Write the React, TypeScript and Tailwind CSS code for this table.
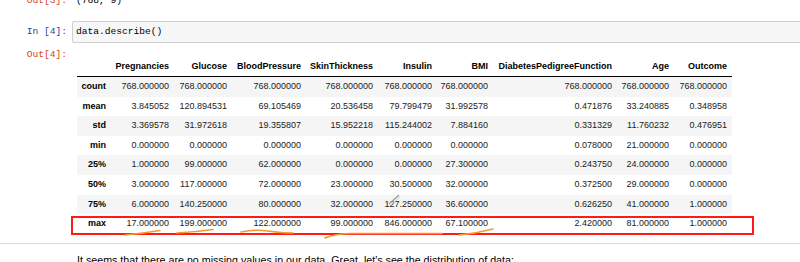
import React from 'react';

const columns = ['Pregnancies', 'Glucose', 'BloodPressure', 'SkinThickness', 'Insulin', 'BMI', 'DiabetesPedigreeFunction', 'Age', 'Outcome'];

const rows: [string, string[]][] = [
  ['count', ['768.000000', '768.000000', '768.000000', '768.000000', '768.000000', '768.000000', '768.000000', '768.000000', '768.000000']],
  ['mean', ['3.845052', '120.894531', '69.105469', '20.536458', '79.799479', '31.992578', '0.471876', '33.240885', '0.348958']],
  ['std', ['3.369578', '31.972618', '19.355807', '15.952218', '115.244002', '7.884160', '0.331329', '11.760232', '0.476951']],
  ['min', ['0.000000', '0.000000', '0.000000', '0.000000', '0.000000', '0.000000', '0.078000', '21.000000', '0.000000']],
  ['25%', ['1.000000', '99.000000', '62.000000', '0.000000', '0.000000', '27.300000', '0.243750', '24.000000', '0.000000']],
  ['50%', ['3.000000', '117.000000', '72.000000', '23.000000', '30.500000', '32.000000', '0.372500', '29.000000', '0.000000']],
  ['75%', ['6.000000', '140.250000', '80.000000', '32.000000', '127.250000', '36.600000', '0.626250', '41.000000', '1.000000']],
  ['max', ['17.000000', '199.000000', '122.000000', '99.000000', '846.000000', '67.100000', '2.420000', '81.000000', '1.000000']],
];

const gridCols = 'grid grid-cols-[34px_63px_58px_74px_72px_59px_56px_124px_57px_58px]';
const mono = "font-['Liberation_Mono',monospace] text-[9.6px]";

const App = () => {
  return (
    <div className="relative w-[800px] h-[262px] overflow-hidden bg-white font-['Liberation_Sans',Arial,sans-serif]">
      {/* previous output, cut at the top */}
      <div className={`flex h-[14px] -mt-[6px] leading-[14px] ${mono}`}>
        <div className="w-[72px] pr-[5px] text-right text-[#D84315]">Out[3]:</div>
        <div className="pl-[4px] text-black">(768, 9)</div>
      </div>

      {/* input cell */}
      <div className={`flex mt-[13px] ${mono}`}>
        <div className="w-[72px] pr-[5px] text-right leading-[22px] text-[#303F9F]">In&nbsp;[4]:</div>
        <div className="flex-1 h-[22px] -mr-[10px] rounded-[2px] border border-[#cfcfcf] bg-[#f7f7f7] pl-[3px] leading-[20px] text-black">
          data.describe()
        </div>
      </div>

      {/* output cell */}
      <div className="flex mt-[5px]">
        <div className={`w-[72px] pr-[5px] text-right leading-[14px] text-[#D84315] ${mono}`}>Out[4]:</div>
        <div className="ml-[5px] mt-[9px] text-[9px] text-[#222]">
          <div className={`${gridCols} h-[20px] border-b border-black items-center font-bold text-black`}>
            <div />
            {columns.map((c) => (
              <div key={c} className="pr-[5px] text-right whitespace-nowrap">{c}</div>
            ))}
          </div>
          {rows.map(([label, vals], i) => (
            <div key={label} className={`${gridCols} h-[19.6px] items-center ${i % 2 === 0 ? 'bg-[#f5f5f5]' : 'bg-white'}`}>
              <div className="pr-[5px] text-right font-bold text-black">{label}</div>
              {vals.map((v, j) => (
                <div key={j} className="pr-[5px] text-right whitespace-nowrap">{v}</div>
              ))}
            </div>
          ))}
        </div>
      </div>

      <div className="mt-[9px] h-px bg-[#dcdcdc]" />

      <p className="mt-[9px] pl-[77px] text-[10.7px] leading-[14px] text-black whitespace-nowrap">
        It seems that there are no missing values in our data. Great, let's see the distribution of data:
      </p>

      {/* red highlight box drawn over the max row */}
      <div className="absolute left-[71px] top-[216px] w-[683px] h-[19px] border-2 border-[#ff1a1a]" />

      {/* hand drawn underlines and pen cursor */}
      <svg className="absolute inset-0 pointer-events-none" width="800" height="262">
        <g fill="none" stroke="#f39a2c" strokeWidth="1.5" strokeLinecap="round">
          <path d="M125 235 Q142 233.5 160 230.5" />
          <path d="M177 233 Q195 232 213 229.5" />
          <path d="M241 232 Q255 229 268 231 Q282 233 293 233" />
          <path d="M325 238 Q334 234 350 233.5 L442 233.5" />
          <path d="M459 235 Q476 233.5 493 229" />
        </g>
        <path d="M389 204 L399 195" stroke="#9a9a9a" strokeWidth="1.2" />
        <path d="M391 205 L400 197" stroke="#c8c8c8" strokeWidth="0.8" />
      </svg>
    </div>
  );
};

export default App;
